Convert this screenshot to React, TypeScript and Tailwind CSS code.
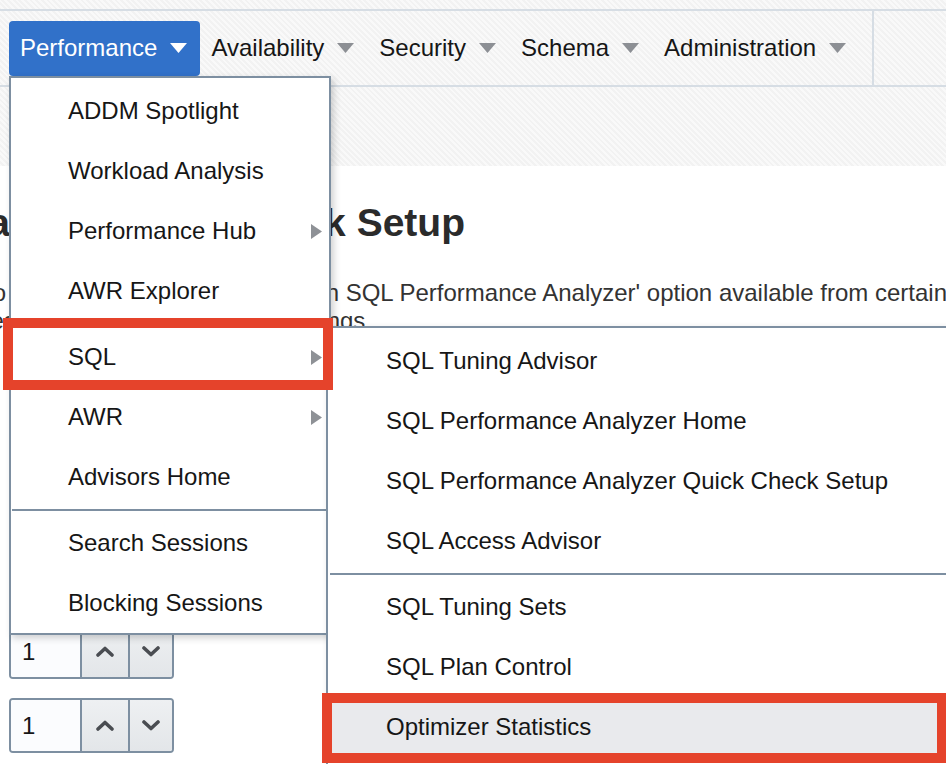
import React from "react";

const NavTri = ({ color }: { color: string }) => (
  <svg width="17" height="10" viewBox="0 0 17 10" className="ml-[13px] shrink-0">
    <polygon points="0,0 17,0 8.5,10" fill={color} />
  </svg>
);

const SubArrow = () => (
  <svg width="11" height="15" viewBox="0 0 11 15" className="shrink-0">
    <polygon points="0,0 11,7.5 0,15" fill="#8e9196" />
  </svg>
);

const ChevUp = () => (
  <svg width="18" height="11" viewBox="0 0 18 11">
    <polyline points="2,9 9,2.5 16,9" fill="none" stroke="#4a4d52" strokeWidth="3.6" strokeLinecap="round" strokeLinejoin="round" />
  </svg>
);
const ChevDown = () => (
  <svg width="18" height="11" viewBox="0 0 18 11">
    <polyline points="2,2 9,8.5 16,2" fill="none" stroke="#4a4d52" strokeWidth="3.6" strokeLinecap="round" strokeLinejoin="round" />
  </svg>
);

const Spinner = () => (
  <div className="flex h-[55px] w-[165px] overflow-hidden rounded-[4px] border-2 border-[#7d8fa1]">
    <div className="flex w-[69px] items-center bg-[#fbfcfe] pl-[11px] text-[24px] text-[#161616]">1</div>
    <div className="flex w-[48px] items-center justify-center border-l-2 border-[#7d8fa1] bg-gradient-to-b from-[#eef0f2] to-[#e3e6e9]">
      <ChevUp />
    </div>
    <div className="flex flex-1 items-center justify-center border-l-2 border-[#7d8fa1] bg-gradient-to-b from-[#eef0f2] to-[#e3e6e9]">
      <ChevDown />
    </div>
  </div>
);

type Entry = { label: string; arrow?: boolean; sep?: boolean; active?: boolean };

const mainItems: Entry[] = [
  { label: "ADDM Spotlight" },
  { label: "Workload Analysis" },
  { label: "Performance Hub", arrow: true },
  { label: "AWR Explorer" },
  { label: "", sep: true },
  { label: "SQL", arrow: true },
  { label: "AWR", arrow: true },
  { label: "Advisors Home" },
  { label: "", sep: true },
  { label: "Search Sessions" },
  { label: "Blocking Sessions" },
];

const subItems: Entry[] = [
  { label: "SQL Tuning Advisor" },
  { label: "SQL Performance Analyzer Home" },
  { label: "SQL Performance Analyzer Quick Check Setup" },
  { label: "SQL Access Advisor" },
  { label: "", sep: true },
  { label: "SQL Tuning Sets" },
  { label: "SQL Plan Control" },
  { label: "Optimizer Statistics", active: true },
];

export default function App() {
  return (
    <div
      className="relative h-[764px] w-[946px] overflow-hidden bg-white text-[#161616]"
      style={{ fontFamily: '"Liberation Sans", Arial, sans-serif' }}
    >
      {/* Header */}
      <div className="h-[166px] bg-[repeating-linear-gradient(45deg,#f9f9f9_0px,#f9f9f9_2px,#f2f2f2_2px,#f2f2f2_4px)] pt-[9px]">
        <div className="flex h-[78px] border-y-2 border-[#d6dde4]">
          <div className="flex w-[874px] items-center border-r-2 border-[#d6dde4] pl-[9px] text-[24px]">
            <div className="flex h-[55px] items-center rounded-[4px] bg-[#3171c9] pl-[11px] pr-[13px] text-white">
              Performance
              <NavTri color="#ffffff" />
            </div>
            {["Availability", "Security", "Schema", "Administration"].map((t) => (
              <div key={t} className="flex h-[55px] items-center pl-[11px] pr-[14px]">
                {t}
                <NavTri color="#8c8f94" />
              </div>
            ))}
          </div>
        </div>
      </div>

      {/* Page content (mostly covered by menus) */}
      <div className="pt-[35px]">
        <div className="flex w-[465px] justify-end overflow-hidden whitespace-nowrap text-[39px] font-bold leading-[44px] text-[#2b2b2b]">
          <span className="shrink-0">SQL Performance Analyzer Quick Check Setup</span>
        </div>
        <div className="mt-[34px] text-[24px] leading-[28px] text-[#333333]">
          <div className="flex whitespace-nowrap">
            <div className="flex w-[339px] shrink-0 justify-end overflow-hidden">
              <span className="shrink-0">This page is used to set up the defaults for the 'Run</span>
            </div>
            <span className="shrink-0">&nbsp;SQL Performance Analyzer' option available from certain pages</span>
          </div>
          <div className="flex w-[372px] justify-end overflow-hidden whitespace-nowrap">
            <span className="shrink-0">console pages, using the saved default settings.</span>
          </div>
        </div>
        <div className="mt-[289px] flex flex-col gap-[19px] pl-[9px]">
          <Spinner />
          <Spinner />
        </div>
      </div>

      {/* Main dropdown */}
      <div className="absolute left-[9px] top-[76px] w-[322px] border-2 border-[#7d8fa1] bg-white pt-[3px] shadow-[3px_3px_7px_rgba(0,0,0,0.18)]">
        {mainItems.map((it, i) =>
          it.sep ? (
            <div key={i} className="flex h-[6px] items-center px-[1px]">
              <div className="h-[2px] w-full bg-[#7d8fa1]" />
            </div>
          ) : (
            <div key={i} className="flex h-[60px] items-center justify-between pl-[57px] pr-[7px] text-[24px]">
              <span>{it.label}</span>
              {it.arrow && <SubArrow />}
            </div>
          )
        )}
      </div>

      {/* SQL submenu */}
      <div className="absolute left-[326px] top-[326px] w-[660px] border-2 border-[#7d8fa1] bg-white pb-[30px] pt-[3px] shadow-[3px_3px_7px_rgba(0,0,0,0.18)]">
        {subItems.map((it, i) =>
          it.sep ? (
            <div key={i} className="flex h-[6px] items-center px-[2px]">
              <div className="h-[2px] w-full bg-[#7d8fa1]" />
            </div>
          ) : (
            <div
              key={i}
              className={`flex h-[60px] items-center pl-[58px] text-[24px] ${it.active ? "bg-[#e9eaed]" : ""}`}
            >
              {it.label}
            </div>
          )
        )}
      </div>

      {/* Annotation boxes */}
      <div className="absolute left-[3px] top-[318px] h-[72px] w-[330px] border-[10px] border-[#e5432b]" />
      <div className="absolute left-[322px] top-[693px] h-[70px] w-[625px] border-[10px] border-[#e5432b]" />
    </div>
  );
}
